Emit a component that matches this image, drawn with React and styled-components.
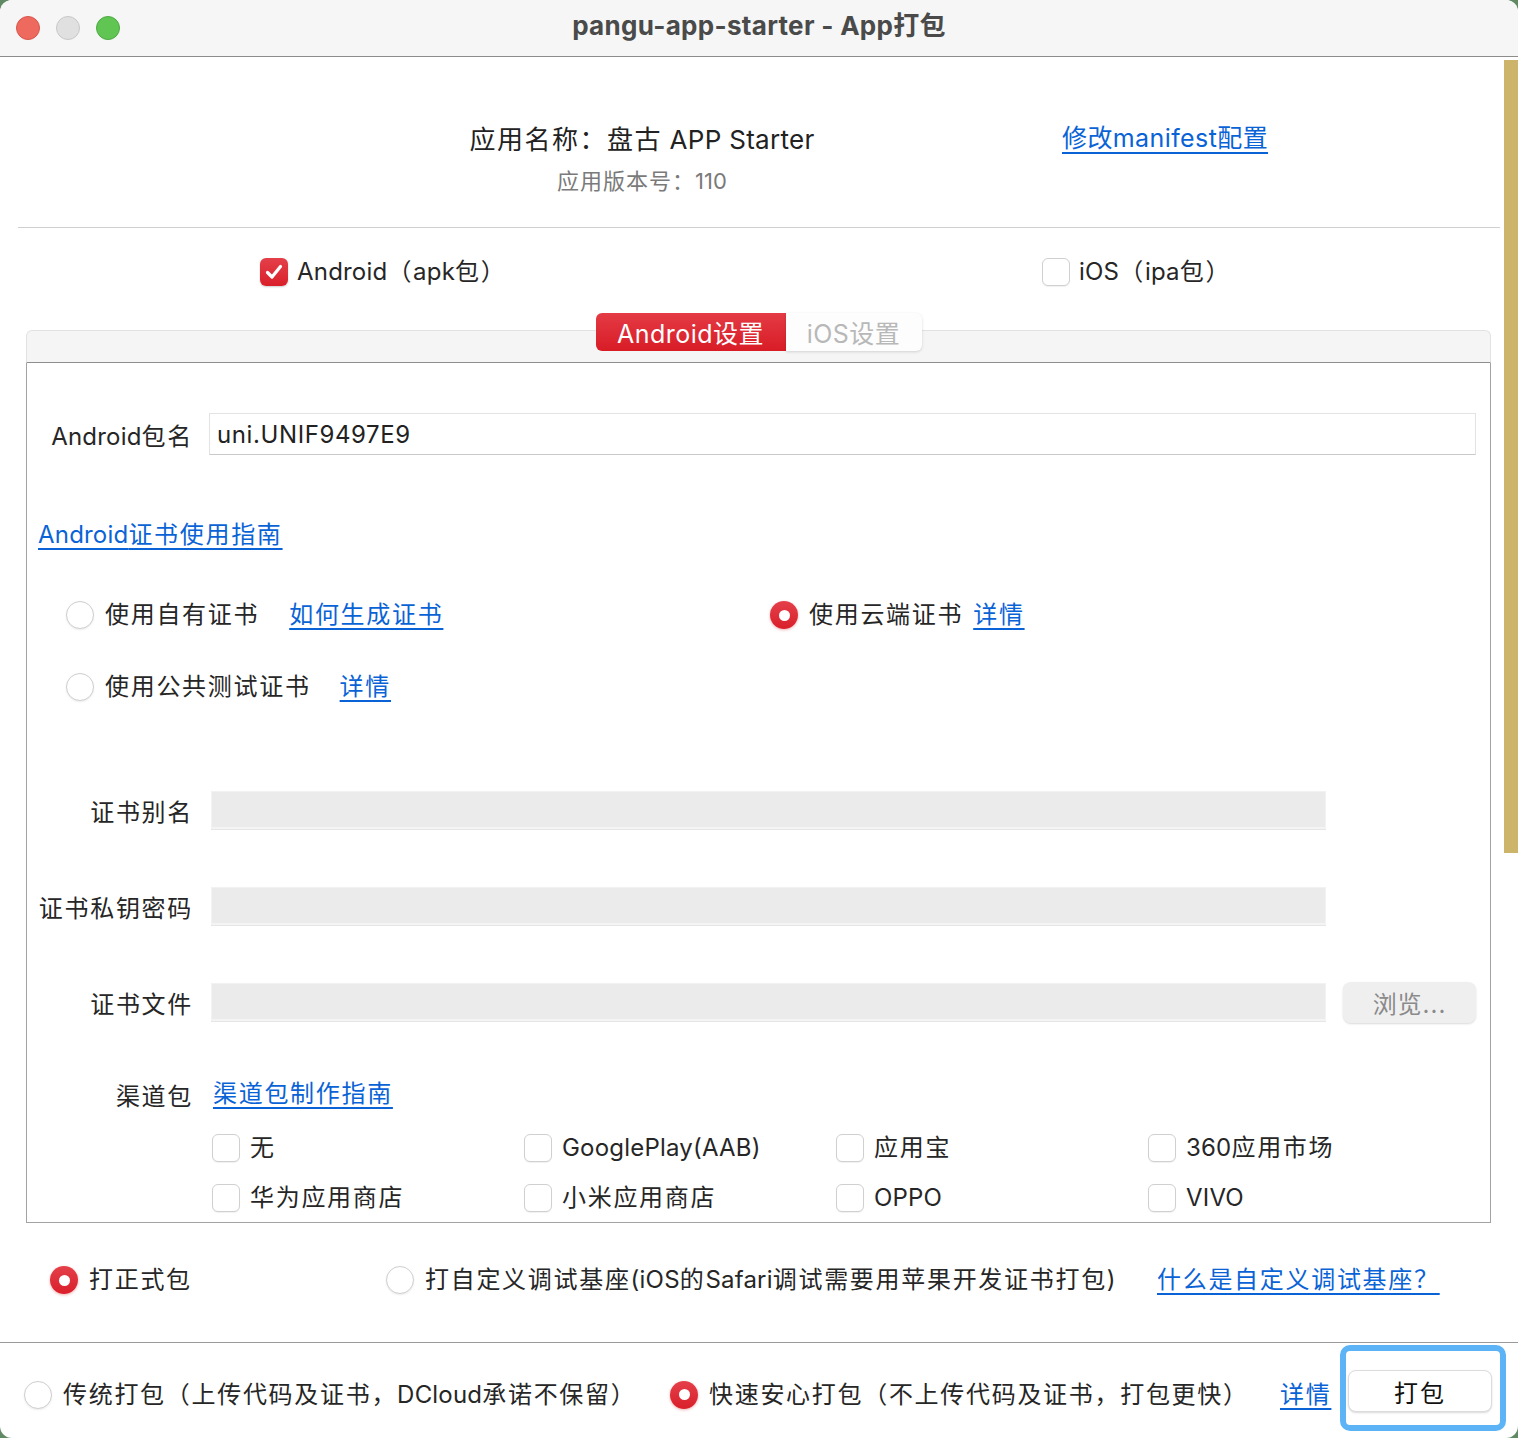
import React from "react";
import styled, { createGlobalStyle, css } from "styled-components";

const FONT = `"Inter", "Noto Sans CJK SC", sans-serif`;

const GlobalStyle = createGlobalStyle`
  html, body {
    margin: 0;
    padding: 0;
    background: #5f8a63;
  }
  body {
    font-family: ${FONT};
    color: #262626;
  }
  * {
    box-sizing: border-box;
  }
`;

// CJK glyphs in the original are set a little looser than the Latin ones
const Cjk = styled.span`
  letter-spacing: ${(p) => p.$ls ?? 1.7}px;
`;

const CJK_RUN = /([\u3000-\u9fff\uff00-\uffef]+)/;

const T = ({ children, ls }) =>
  String(children)
    .split(CJK_RUN)
    .filter(Boolean)
    .map((part, i) =>
      CJK_RUN.test(part) ? (
        <Cjk key={i} $ls={ls}>
          {part}
        </Cjk>
      ) : (
        <React.Fragment key={i}>{part}</React.Fragment>
      )
    );

const Window = styled.div`
  width: 1518px;
  height: 1438px;
  background: #fff;
  border-radius: 12px;
  overflow: hidden;
  display: flex;
  flex-direction: column;
`;

const TitleBar = styled.div`
  height: 57px;
  flex: none;
  background: #f6f6f6;
  border-bottom: 1px solid #8c8c8c;
  display: flex;
  align-items: center;
  position: relative;
`;

const Lights = styled.div`
  display: flex;
  gap: 16px;
  padding-left: 16px;
`;

const Light = styled.span`
  width: 24px;
  height: 24px;
  border-radius: 50%;
  background: ${(p) => p.$c};
  border: 1px solid ${(p) => p.$b};
`;

const Title = styled.div`
  position: absolute;
  left: 0;
  right: 0;
  top: 8px;
  text-align: center;
  font-size: 26px;
  line-height: 36px;
  font-weight: 700;
  letter-spacing: 0.3px;
  color: #4a4a4a;
  pointer-events: none;
`;

const ScrollArea = styled.div`
  height: 1285px;
  flex: none;
  display: flex;
`;

const Content = styled.div`
  flex: 1;
  padding: 0 4px 0 18px;
  display: flex;
  flex-direction: column;
`;

const ScrollTrack = styled.div`
  width: 16px;
  flex: none;
  padding-top: 3px;
`;

const ScrollThumb = styled.div`
  width: 14px;
  height: 793px;
  background: #cdb46b;
`;

const Header = styled.div`
  height: 171px;
  flex: none;
  border-bottom: 1px solid #d0d0d0;
  display: flex;
  align-items: flex-start;
`;

const AppInfo = styled.div`
  width: 520px;
  margin-left: 364px;
  padding-top: 65px;
  text-align: center;
`;

const AppName = styled.div`
  font-size: 26px;
  line-height: 36px;
  color: #222;
  letter-spacing: 0.3px;
`;

const AppVersion = styled.div`
  margin-top: 8px;
  font-size: 22px;
  line-height: 30px;
  color: #7a7a7a;
`;

const Link = styled.a`
  color: #0a63d6;
  text-decoration: underline;
  text-underline-offset: 5px;
  text-decoration-thickness: 2px;
  font-size: ${(p) => p.$size || 24}px;
  line-height: 36px;
  letter-spacing: 0.2px;
  cursor: pointer;
  white-space: nowrap;
`;

const HeaderLink = styled(Link)`
  margin-left: 160px;
  margin-top: 63px;
  letter-spacing: 0.4px;
`;

const PlatformRow = styled.div`
  margin-top: 24px;
  height: 40px;
  display: grid;
  grid-template-columns: 782px auto;
  padding-left: 242px;
  align-items: center;
`;

const Option = styled.label`
  display: flex;
  align-items: center;
  gap: ${(p) => p.$gap || 10}px;
  font-size: 24px;
  line-height: 36px;
  letter-spacing: 0.2px;
  color: #262626;
  white-space: nowrap;
`;

const Box = styled.span`
  width: 28px;
  height: 28px;
  border-radius: 6px;
  flex: none;
  display: inline-flex;
  align-items: center;
  justify-content: center;
  ${(p) =>
    p.$checked
      ? css`
          background: linear-gradient(#e4404a, #d91f2a);
          box-shadow: 0 1px 2px rgba(0, 0, 0, 0.2);
        `
      : css`
          background: #fff;
          border: 1px solid #d0d0d0;
          box-shadow: 0 1px 1px rgba(0, 0, 0, 0.06);
        `}
`;

const Dot = styled.span`
  width: 28px;
  height: 28px;
  border-radius: 50%;
  flex: none;
  display: inline-flex;
  align-items: center;
  justify-content: center;
  ${(p) =>
    p.$checked
      ? css`
          background: linear-gradient(#e4404a, #d91f2a);
          box-shadow: 0 1px 3px rgba(200, 0, 0, 0.3);
          &::after {
            content: "";
            width: 11px;
            height: 11px;
            border-radius: 50%;
            background: #fff;
          }
        `
      : css`
          background: #fff;
          border: 1px solid #cfcfcf;
          box-shadow: 0 1px 2px rgba(0, 0, 0, 0.08);
        `}
`;

const Checkbox = ({ checked, children, gap }) => (
  <Option $gap={gap}>
    <Box $checked={checked}>
      {checked && (
        <svg width="20" height="20" viewBox="0 0 20 20">
          <path
            d="M3.5 10.5 L8 15 L16.5 4.5"
            fill="none"
            stroke="#fff"
            strokeWidth="3.2"
            strokeLinecap="round"
            strokeLinejoin="round"
          />
        </svg>
      )}
    </Box>
    <span>
      <T>{children}</T>
    </span>
  </Option>
);

const Radio = ({ checked, children, gap }) => (
  <Option $gap={gap}>
    <Dot $checked={checked} />
    <span>
      <T>{children}</T>
    </span>
  </Option>
);

const PanelWrap = styled.div`
  margin: 21px 9px 0 8px;
  display: flex;
  flex-direction: column;
`;

const TabStrip = styled.div`
  display: flex;
  justify-content: center;
  margin-bottom: -21px;
  position: relative;
  z-index: 1;
`;

const Tab = styled.div`
  height: 38px;
  width: ${(p) => p.$w}px;
  display: flex;
  align-items: center;
  justify-content: center;
  font-size: 25px;
  letter-spacing: 0.5px;
  ${(p) =>
    p.$active
      ? css`
          background: linear-gradient(#e43b45, #d81c26);
          color: #fff;
          border-radius: 6px 0 0 6px;
        `
      : css`
          background: #fdfdfd;
          color: #b8b8b8;
          border-radius: 0 6px 6px 0;
          box-shadow: 0 1px 3px rgba(0, 0, 0, 0.15);
        `}
`;

const PanelHead = styled.div`
  height: 33px;
  background: #f5f5f5;
  border: 1px solid #e2e2e2;
  border-bottom: 1px solid #8e8e8e;
  border-radius: 6px 6px 0 0;
`;

const PanelBody = styled.div`
  height: 860px;
  border: 1px solid #a3a3a3;
  border-top: none;
  padding: 0 14px 6px 11px;
  display: flex;
  flex-direction: column;
`;

const FieldRow = styled.div`
  display: grid;
  grid-template-columns: 171px 1fr ${(p) => (p.$extra ? "auto" : "")};
  align-items: center;
  height: ${(p) => p.$h}px;
  margin-top: ${(p) => p.$mt}px;
`;

const FieldLabel = styled.div`
  text-align: right;
  padding-right: 16px;
  font-size: 24px;
  letter-spacing: 0.2px;
  color: #262626;
  white-space: nowrap;
`;

const TextInput = styled.div`
  height: 42px;
  border: 1px solid #e3e3e3;
  border-bottom-color: #c9c9c9;
  background: #fff;
  display: flex;
  align-items: center;
  padding-left: 7px;
  font-size: 24px;
  letter-spacing: 0.6px;
  color: #222;
`;

const GrayInput = styled.div`
  height: 38px;
  width: 1115px;
  margin-left: 2px;
  background: #ebebeb;
  border: 1px solid #f2f2f2;
  border-bottom: 2px solid #f4f4f4;
  box-shadow: 0 1px 0 #e6e6e6;
`;

const BrowseButton = styled.div`
  width: 133px;
  height: 41px;
  margin-left: 17px;
  border-radius: 8px;
  background: #efefef;
  box-shadow: 0 1px 2px rgba(0, 0, 0, 0.15);
  display: flex;
  align-items: center;
  justify-content: center;
  font-size: 24px;
  color: #8a8a8a;
  letter-spacing: 1px;
`;

const GuideRow = styled.div`
  margin-top: 62px;
  height: 36px;
  display: flex;
  align-items: center;
`;

const CertRow = styled.div`
  margin-top: ${(p) => p.$mt}px;
  height: 40px;
  padding-left: 28px;
  display: grid;
  grid-template-columns: 704px auto;
  align-items: center;
`;

const Inline = styled.div`
  display: flex;
  align-items: center;
  gap: ${(p) => p.$gap}px;
`;

const ChannelGrid = styled.div`
  margin-top: 18px;
  margin-left: 174px;
  display: grid;
  grid-template-columns: repeat(4, 312px);
  grid-auto-rows: 36px;
  row-gap: 14px;
  align-items: center;
`;

const BuildTypeRow = styled.div`
  margin-top: 37px;
  height: 40px;
  padding-left: 32px;
  display: grid;
  grid-template-columns: 336px 771px auto;
  align-items: center;
`;

const Footer = styled.div`
  flex: 1;
  border-top: 1px solid #9a9a9a;
  padding: 8px 0 0 24px;
  display: grid;
  grid-template-columns: 646px 610px 60px auto;
  align-items: center;
`;

const FocusRing = styled.div`
  align-self: start;
  margin-top: -6px;
  width: 166px;
  height: 86px;
  border: 6px solid #5cb3f6;
  border-radius: 10px;
  padding: 19px 8px 0 2px;
`;

const PackButton = styled.div`
  width: 144px;
  height: 42px;
  border-radius: 8px;
  background: #fff;
  border: 1px solid #dcdcdc;
  box-shadow: 0 1px 2px rgba(0, 0, 0, 0.15);
  display: flex;
  align-items: center;
  justify-content: center;
  font-size: 24px;
  letter-spacing: 2px;
  color: #111;
`;

const channels = [
  "无",
  "GooglePlay(AAB)",
  "应用宝",
  "360应用市场",
  "华为应用商店",
  "小米应用商店",
  "OPPO",
  "VIVO",
];

export default function App() {
  return (
    <>
      <GlobalStyle />
      <Window>
        <TitleBar>
          <Lights>
            <Light $c="#ee6a5f" $b="#d9544a" />
            <Light $c="#e0e0e0" $b="#c8c8c8" />
            <Light $c="#60c553" $b="#4daa41" />
          </Lights>
          <Title>pangu-app-starter - App打包</Title>
        </TitleBar>

        <ScrollArea>
          <Content>
            <Header>
              <AppInfo>
                <AppName>
                  <T ls={1.5}>应用名称：盘古 APP Starter</T>
                </AppName>
                <AppVersion>
                  <T ls={1}>应用版本号：110</T>
                </AppVersion>
              </AppInfo>
              <HeaderLink $size={25}>修改manifest配置</HeaderLink>
            </Header>

            <PlatformRow>
              <Checkbox checked gap={9}>Android（apk包）</Checkbox>
              <Checkbox gap={9}>iOS（ipa包）</Checkbox>
            </PlatformRow>

            <PanelWrap>
              <TabStrip>
                <Tab $active $w={190}>Android设置</Tab>
                <Tab $w={136}>iOS设置</Tab>
              </TabStrip>
              <PanelHead />
              <PanelBody>
                <FieldRow $h={42} $mt={50}>
                  <FieldLabel>
                    <T>Android包名</T>
                  </FieldLabel>
                  <TextInput>uni.UNIF9497E9</TextInput>
                </FieldRow>

                <GuideRow>
                  <Link>
                    <T>Android证书使用指南</T>
                  </Link>
                </GuideRow>

                <CertRow $mt={42}>
                  <Inline $gap={30}>
                    <Radio gap={11}>使用自有证书</Radio>
                    <Link>
                      <T>如何生成证书</T>
                    </Link>
                  </Inline>
                  <Inline $gap={10}>
                    <Radio checked gap={11}>使用云端证书</Radio>
                    <Link>
                      <T>详情</T>
                    </Link>
                  </Inline>
                </CertRow>
                <CertRow $mt={32}>
                  <Inline $gap={29}>
                    <Radio gap={11}>使用公共测试证书</Radio>
                    <Link>
                      <T>详情</T>
                    </Link>
                  </Inline>
                </CertRow>

                <FieldRow $h={38} $mt={84}>
                  <FieldLabel>
                    <T>证书别名</T>
                  </FieldLabel>
                  <GrayInput />
                </FieldRow>
                <FieldRow $h={38} $mt={58}>
                  <FieldLabel>
                    <T>证书私钥密码</T>
                  </FieldLabel>
                  <GrayInput />
                </FieldRow>
                <FieldRow $h={42} $mt={56} $extra>
                  <FieldLabel>
                    <T>证书文件</T>
                  </FieldLabel>
                  <GrayInput />
                  <BrowseButton>浏览...</BrowseButton>
                </FieldRow>

                <FieldRow $h={36} $mt={53}>
                  <FieldLabel>
                    <T>渠道包</T>
                  </FieldLabel>
                  <div style={{ paddingLeft: 4 }}>
                    <Link>
                      <T>渠道包制作指南</T>
                    </Link>
                  </div>
                </FieldRow>
                <ChannelGrid>
                  {channels.map((c) => (
                    <Checkbox key={c}>{c}</Checkbox>
                  ))}
                </ChannelGrid>
              </PanelBody>
            </PanelWrap>

            <BuildTypeRow>
              <Radio checked gap={11}>打正式包</Radio>
              <Radio gap={11}>打自定义调试基座(iOS的Safari调试需要用苹果开发证书打包)</Radio>
              <Link>
                <T>什么是自定义调试基座？</T>
              </Link>
            </BuildTypeRow>
          </Content>
          <ScrollTrack>
            <ScrollThumb />
          </ScrollTrack>
        </ScrollArea>

        <Footer>
          <Radio gap={11}>传统打包（上传代码及证书，DCloud承诺不保留）</Radio>
          <Radio checked gap={11}>快速安心打包（不上传代码及证书，打包更快）</Radio>
          <Link>
            <T>详情</T>
          </Link>
          <FocusRing>
            <PackButton>打包</PackButton>
          </FocusRing>
        </Footer>
      </Window>
    </>
  );
}
